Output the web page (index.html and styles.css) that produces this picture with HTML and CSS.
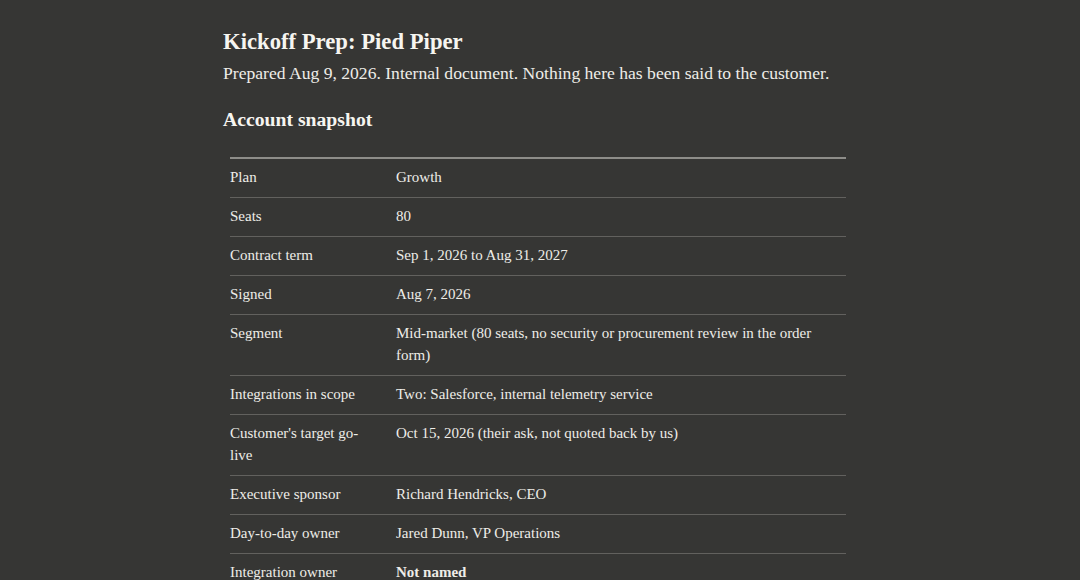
FILE: index.html
```html
<!DOCTYPE html>
<html lang="en">
<head>
    <meta charset="UTF-8">
    <title>Kickoff Prep: Pied Piper</title>
    <link rel="stylesheet" href="styles.css">
</head>
<body>
<div class="page">
    <h1 class="title">Kickoff Prep: Pied Piper</h1>
    <p class="lead">Prepared Aug 9, 2026. Internal document. Nothing here has been said to the customer.</p>

    <h2 class="section">Account snapshot</h2>
    <table class="facts">
        <tr><td class="key">Plan</td><td>Growth</td></tr>
        <tr><td class="key">Seats</td><td>80</td></tr>
        <tr><td class="key">Contract term</td><td>Sep 1, 2026 to Aug 31, 2027</td></tr>
        <tr><td class="key">Signed</td><td>Aug 7, 2026</td></tr>
        <tr><td class="key">Segment</td><td>Mid-market (80 seats, no security or procurement review in the order form)</td></tr>
        <tr><td class="key">Integrations in scope</td><td>Two: Salesforce, internal telemetry service</td></tr>
        <tr><td class="key">Customer's target go-live</td><td>Oct 15, 2026 (their ask, not quoted back by us)</td></tr>
        <tr><td class="key">Executive sponsor</td><td>Richard Hendricks, CEO</td></tr>
        <tr><td class="key">Day-to-day owner</td><td>Jared Dunn, VP Operations</td></tr>
        <tr><td class="key">Integration owner</td><td><strong>Not named</strong></td></tr>
    </table>
</div>
</body>
</html>
```

FILE: styles.css
```css
html, body {
    margin: 0;
    background-color: #363634;
}
body {
    font-family: "Liberation Serif", "DejaVu Serif", serif;
    color: #eeede8;
}
.page {
    width: 634px;
    margin: 0 auto;
    padding-top: 27px;
}
.title {
    margin: 0;
    font-size: 22.7px;
    line-height: 30px;
    font-weight: bold;
    color: #f6f5f0;
}
.lead {
    margin: 4px 0 0;
    font-size: 17.6px;
    line-height: 24px;
}
.section {
    margin: 21px 0 0;
    font-size: 19.7px;
    line-height: 26px;
    font-weight: bold;
    color: #f6f5f0;
}
.facts {
    width: 616px;
    margin: 25px 0 0 7px;
    border-collapse: collapse;
    border-top: 2px solid #8e8d89;
    font-size: 15px;
    line-height: 22px;
}
.facts td {
    padding: 7px 16px 9px 0;
    vertical-align: top;
    border-bottom: 1px solid #62615e;
}
.facts td.key {
    width: 140px;
    padding-right: 26px;
}
.facts strong {
    font-weight: bold;
}
```
